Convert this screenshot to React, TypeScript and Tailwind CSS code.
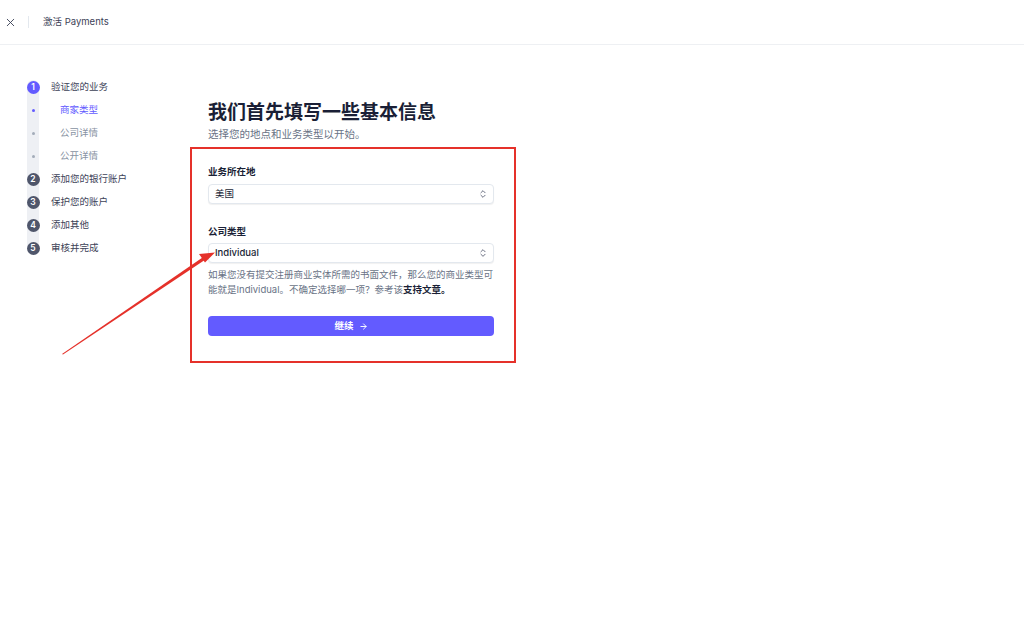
import { X, ChevronsUpDown, ArrowRight } from "lucide-react";

const steps = [
  { n: 1, label: "验证您的业务", active: true },
  { n: 2, label: "添加您的银行账户" },
  { n: 3, label: "保护您的账户" },
  { n: 4, label: "添加其他" },
  { n: 5, label: "审核并完成" },
];

const subSteps = [
  { label: "商家类型", active: true },
  { label: "公司详情" },
  { label: "公开详情" },
];

function StepRow({ n, label, active }: { n: number; label: string; active?: boolean }) {
  return (
    <div className="flex h-[23px] items-center">
      <div className="flex w-[14px] justify-center">
        <span
          className={`flex h-[13px] w-[13px] items-center justify-center rounded-full text-[8.5px] font-semibold text-white ${
            active ? "bg-[#635bff]" : "bg-[#4f566b]"
          }`}
        >
          {n}
        </span>
      </div>
      <span className="ml-[11px] text-[9.5px] text-[#3c4257]">{label}</span>
    </div>
  );
}

function Select({ value, bold }: { value: string; bold?: boolean }) {
  return (
    <div className="flex h-[20px] items-center justify-between rounded-[4px] border border-[#e3e8ee] bg-white pl-[6px] pr-[5px] shadow-[0_1px_1px_rgba(0,0,0,0.06)]">
      <span className={`text-[9.5px] text-[#1a1f36] ${bold ? "font-medium" : ""}`}>{value}</span>
      <ChevronsUpDown size={10} strokeWidth={2} className="text-[#4f566b]" />
    </div>
  );
}

export default function App() {
  return (
    <div className="relative h-[641px] w-[1024px] overflow-hidden bg-white font-['Inter','Noto_Sans_CJK_SC',sans-serif]">
      {/* top bar */}
      <div className="flex h-[45px] items-center border-b border-[#eef0f3]">
        <X size={13} strokeWidth={1.7} className="ml-[4px] text-[#3c4257]" />
        <div className="ml-[11px] h-[12px] w-px bg-[#e3e8ee]" />
        <span className="ml-[14px] text-[9.5px] text-[#3c4257]">激活 Payments</span>
      </div>

      <div className="flex">
        {/* sidebar */}
        <div className="w-[190px] pl-[26px] pt-[31px]">
          <div className="relative">
            <div className="absolute left-[1px] top-[4px] h-[170px] w-[12px] rounded-full bg-[#eef0f4]" />
            <div className="relative">
              <StepRow {...steps[0]} />
              {subSteps.map((s) => (
                <div key={s.label} className="flex h-[23px] items-center">
                  <div className="flex w-[14px] justify-center">
                    <span
                      className={`h-[3px] w-[3px] rounded-full ${s.active ? "bg-[#635bff]" : "bg-[#a3acb9]"}`}
                    />
                  </div>
                  <span
                    className={`ml-[20px] text-[9.5px] ${s.active ? "text-[#635bff]" : "text-[#8792a2]"}`}
                  >
                    {s.label}
                  </span>
                </div>
              ))}
              {steps.slice(1).map((s) => (
                <StepRow key={s.n} {...s} />
              ))}
            </div>
          </div>
        </div>

        {/* main */}
        <div className="pt-[56px]">
          <div className="pl-[18px]">
            <h1 className="text-[19px] font-bold leading-[24px] text-[#1a1f36]">我们首先填写一些基本信息</h1>
            <p className="mt-[3px] text-[10.5px] leading-[14px] text-[#697386]">选择您的地点和业务类型以开始。</p>
          </div>

          <div className="mt-[5px] w-[326px] border-2 border-[#e5312a] pb-[25px] pl-[16px] pr-[20px] pt-[16px]">
            <div className="text-[9.5px] font-semibold leading-[14px] text-[#1a1f36]">业务所在地</div>
            <div className="mt-[5px]">
              <Select value="美国" />
            </div>

            <div className="mt-[21px] text-[9.5px] font-semibold leading-[14px] text-[#1a1f36]">公司类型</div>
            <div className="mt-[4px]">
              <Select value="Individual" bold />
            </div>
            <p className="mt-[4px] text-[9.5px] leading-[15px] text-[#697386]">
              如果您没有提交注册商业实体所需的书面文件，那么您的商业类型可能就是Individual。不确定选择哪一项？参考该<span className="font-semibold text-[#1a1f36]">支持文章。</span>
            </p>

            <button className="mt-[19px] flex h-[20px] w-full items-center justify-center gap-[5px] rounded-[4px] bg-[#635bff] text-[9.5px] font-semibold text-white">
              继续 <ArrowRight size={9} strokeWidth={2.5} />
            </button>
          </div>
        </div>
      </div>

      {/* annotation arrow */}
      <svg className="pointer-events-none absolute left-0 top-0" width="1024" height="641">
        <polygon points="62,354 204,256.5 205.5,259.5 63,354.5" fill="#e5312a" />
        <polygon points="215,252.5 199,254 205,262.5" fill="#e5312a" />
      </svg>
    </div>
  );
}
